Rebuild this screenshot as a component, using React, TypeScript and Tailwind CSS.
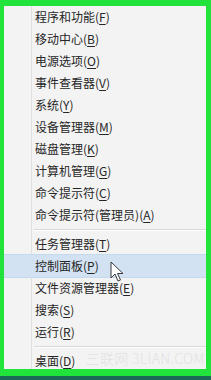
type Item = { label: string; key: string; active?: boolean };

const groups: Item[][] = [
  [
    { label: "程序和功能", key: "F" },
    { label: "移动中心", key: "B" },
    { label: "电源选项", key: "O" },
    { label: "事件查看器", key: "V" },
    { label: "系统", key: "Y" },
    { label: "设备管理器", key: "M" },
    { label: "磁盘管理", key: "K" },
    { label: "计算机管理", key: "G" },
    { label: "命令提示符", key: "C" },
    { label: "命令提示符(管理员)", key: "A" },
  ],
  [
    { label: "任务管理器", key: "T" },
    { label: "控制面板", key: "P", active: true },
    { label: "文件资源管理器", key: "E" },
    { label: "搜索", key: "S" },
    { label: "运行", key: "R" },
  ],
  [{ label: "桌面", key: "D" }],
];

function Cursor() {
  return (
    <svg className="absolute left-[106px] top-[6px]" width="14" height="22" viewBox="0 0 14 22">
      <path
        d="M1 1 L1 17 L5 13 L8 20 L10.5 19 L7.5 12.5 L13 12.5 Z"
        fill="#ffffff"
        stroke="#3a3a3a"
        strokeWidth="1"
        strokeLinejoin="round"
      />
    </svg>
  );
}

function Row({ item }: { item: Item }) {
  return (
    <div
      className={`relative flex h-[22px] items-center ${
        item.active ? "bg-[#d2e2f2] outline outline-1 outline-[#c4d8ee]" : ""
      }`}
    >
      <div className={`h-full w-[28px] shrink-0 ${item.active ? "" : "border-r border-[#e0e0e0]"}`} />
      <span className="pl-[3px] text-[12px] leading-none text-[#262626]">
        {item.label}(<span className="underline underline-offset-2">{item.key}</span>)
      </span>
      {item.active && <Cursor />}
    </div>
  );
}

function Separator() {
  return (
    <div className="flex h-[7px]">
      <div className="h-full w-[28px] shrink-0 border-r border-[#e0e0e0]" />
      <div className="flex flex-1 flex-col justify-center pl-[2px]">
        <div className="h-px bg-[#d9d9d9]" />
        <div className="h-px bg-white" />
      </div>
    </div>
  );
}

export default function App() {
  return (
    <div
      className="flex h-[380px] w-[211px] flex-col overflow-hidden bg-[#22e23c]"
      style={{ fontFamily: '"Noto Sans CJK SC", "Microsoft YaHei", sans-serif' }}
    >
      <div className="relative ml-[4px] mr-[5px] mt-[6px] h-[363px] overflow-hidden bg-[#f3f3f3]">
        {groups.map((g, gi) => (
          <div key={gi}>
            {gi > 0 && <Separator />}
            {g.map((item) => (
              <Row key={item.label} item={item} />
            ))}
          </div>
        ))}
        <div className="absolute bottom-[3px] right-[1px] text-[14px] font-light leading-[16px] tracking-wide text-[#e2e2e2]">
          三联网 3LIAN.COM
        </div>
      </div>
      <div className="h-[7px] shrink-0" />
      <div className="flex-1 bg-[#1b6a57]" />
    </div>
  );
}
